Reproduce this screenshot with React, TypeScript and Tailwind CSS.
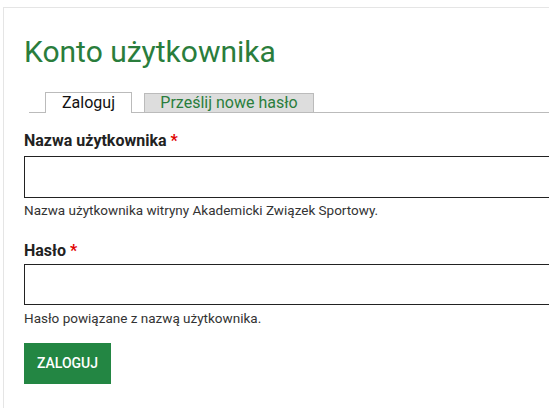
const App = () => {
  return (
    <div className="w-[549px] h-[408px] bg-white overflow-hidden font-['Roboto',sans-serif]">
      <div className="ml-[3px] mt-[7px] h-[420px] w-[600px] border-l border-t border-[#e5e5e5] pl-[20px]">
        <h1 className="pt-[26px] text-[30px] leading-[36px] text-[#2a7d3c] font-normal">Konto użytkownika</h1>

        <div className="mt-[22px] ml-[5px] flex items-end gap-[12px] border-b border-[#bbbbbb] pl-[16px]">
          <div className="-mb-px flex h-[21px] w-[87px] items-center justify-center border border-b-0 border-[#bbbbbb] bg-white text-[16px] text-[#111]">
            Zaloguj
          </div>
          <div className="flex h-[19px] w-[170px] items-center justify-center border border-b-0 border-[#bbbbbb] bg-[#dddddd] text-[16px] text-[#2a7d3c]">
            Prześlij nowe hasło
          </div>
        </div>

        <div className="mt-[18px] flex flex-col">
          <label className="text-[16px] leading-[20px] font-bold text-[#222]">
            Nazwa użytkownika <span className="text-[#e00000]">*</span>
          </label>
          <input type="text" className="mt-[5px] h-[42px] w-[560px] border border-[#222] bg-white" />
          <p className="mt-[4px] text-[13.5px] leading-[16px] text-[#333]">Nazwa użytkownika witryny Akademicki Związek Sportowy.</p>

          <label className="mt-[23px] text-[16px] leading-[20px] font-bold text-[#222]">
            Hasło <span className="text-[#e00000]">*</span>
          </label>
          <input type="password" className="mt-[3px] h-[41px] w-[560px] border border-[#222] bg-white" />
          <p className="mt-[5px] text-[13.5px] leading-[16px] text-[#333]">Hasło powiązane z nazwą użytkownika.</p>

          <div className="mt-[17px]">
            <button className="h-[41px] w-[87px] bg-[#238643] text-[14px] font-medium text-white">ZALOGUJ</button>
          </div>
        </div>
      </div>
    </div>
  )
}

export default App
